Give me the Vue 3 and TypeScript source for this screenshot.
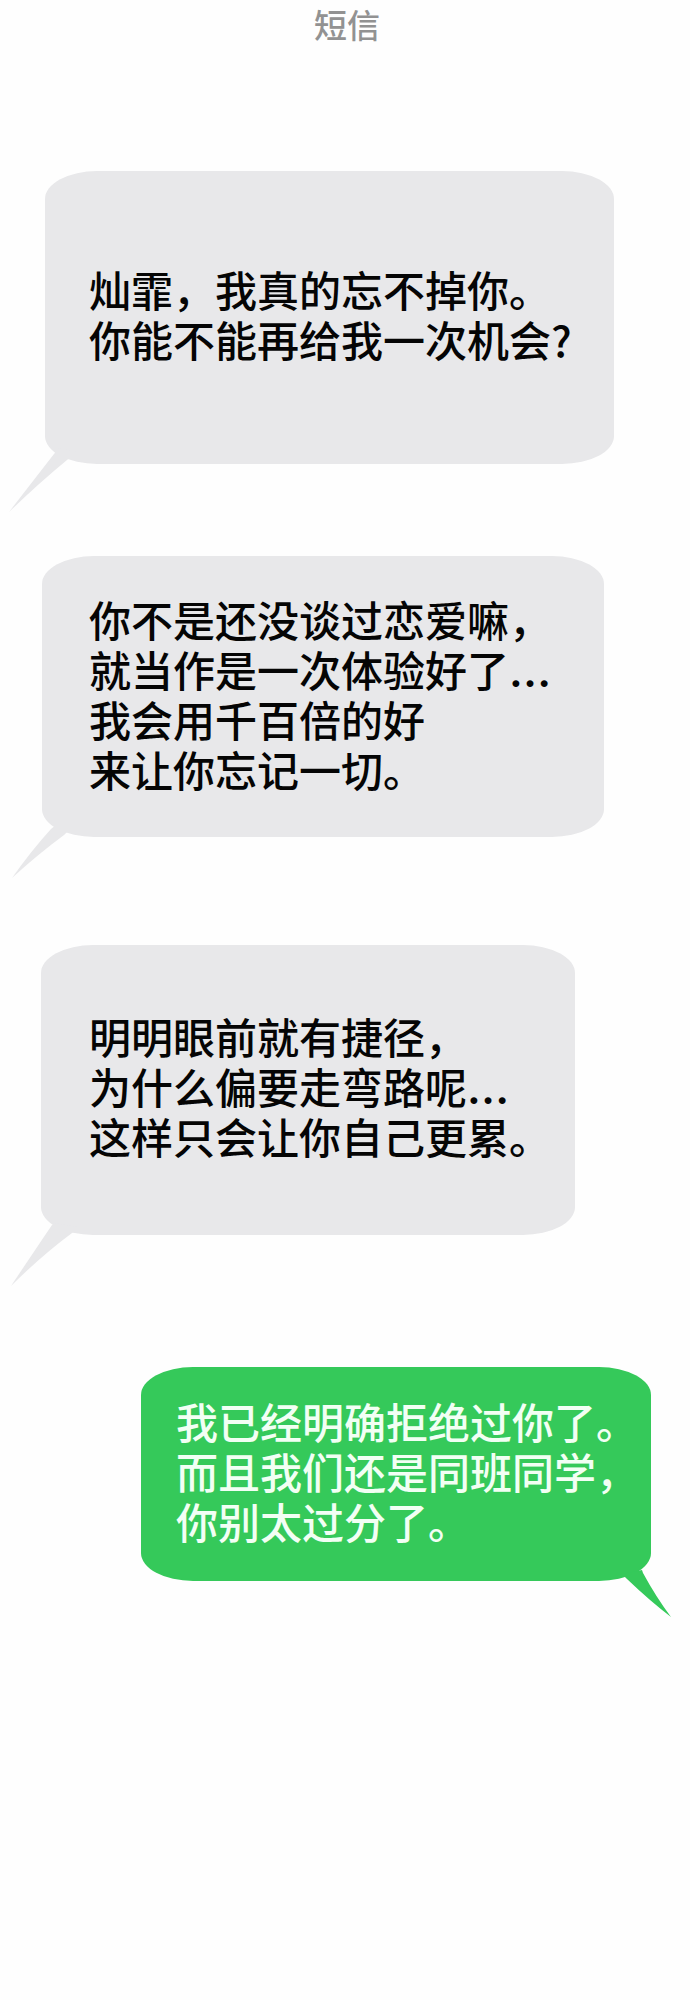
<script setup lang="ts">
interface Message {
  id: string
  side: 'received' | 'sent'
  lines: string[]
  tail: string
}

const messages: Message[] = [
  {
    id: 'plea',
    side: 'received',
    lines: ['灿霏，我真的忘不掉你。', '你能不能再给我一次机会?'],
    tail: 'M50 0 L45 6 Q24 33 0 64 Q30 35 58 12 L68 4 Z',
  },
  {
    id: 'offer',
    side: 'received',
    lines: ['你不是还没谈过恋爱嘛，', '就当作是一次体验好了…', '我会用千百倍的好', '来让你忘记一切。'],
    tail: 'M46 0 L41 4 Q21 26 2 53 Q27 30 54 10 L64 0 Z',
  },
  {
    id: 'shortcut',
    side: 'received',
    lines: ['明明眼前就有捷径，', '为什么偏要走弯路呢…', '这样只会让你自己更累。'],
    tail: 'M46 0 L43 2 Q20 36 2 63 Q32 33 63 10 L70 4 Z',
  },
  {
    id: 'refusal',
    side: 'sent',
    lines: ['我已经明确拒绝过你了。', '而且我们还是同班同学，', '你别太过分了。'],
    tail: 'M4 4 L9 9 Q32 31 53 47 Q38 27 25 3 L24 0 Z',
  },
]
</script>

<template>
  <main class="page">
    <h1 class="title">短信</h1>
    <ol class="thread">
      <li v-for="m in messages" :key="m.id" class="bubble" :class="[m.side, m.id]">
        <p class="text">
          <span v-for="line in m.lines" :key="line" class="line">{{ line.replace('…', '') }}<span v-if="line.endsWith('…')" class="dots">…</span></span>
        </p>
        <svg class="tail" width="72" height="64" viewBox="0 0 72 64" aria-hidden="true">
          <path :d="m.tail" fill="currentColor" />
        </svg>
      </li>
    </ol>
  </main>
</template>

<style>
html,
body {
  margin: 0;
  background: #fefefe;
}
</style>

<style scoped>
.page {
  font-family: "Noto Sans CJK SC", sans-serif;
  min-height: 100vh;
  box-sizing: border-box;
}

.title {
  margin: 0;
  font-size: 33px;
  line-height: 48px;
  font-weight: 500;
  text-align: center;
  text-indent: 4px;
  color: #929292;
}

.thread {
  list-style: none;
  margin: 0;
  padding: 123px 39px 60px 41px;
  display: flex;
  flex-direction: column;
  align-items: flex-start;
}

.bubble {
  position: relative;
  border-radius: 52px / 28px;
}

.received {
  background: #e8e8ea;
  color: #e8e8ea;
}

.sent {
  align-self: flex-end;
  background: #35c95a;
  color: #35c95a;
}

.plea {
  margin: 0 0 92px 4px;
  padding: 93px 42px 100px 44px;
}

.offer {
  margin: 0 0 108px 1px;
  padding: 38px 53px 43px 47px;
}

.shortcut {
  margin: 0 0 132px;
  padding: 66px 24px 74px 48px;
}

.refusal {
  padding: 29px 13px 35px 35px;
}

.text {
  margin: 0;
  font-size: 42px;
  line-height: 50px;
  font-weight: 500;
  color: #050505;
}

.sent .text {
  color: #f2fff4;
}

.line {
  display: block;
}

.dots {
  font-family: "Liberation Serif", serif;
  font-weight: 700;
  line-height: 1;
}

.tail {
  position: absolute;
}

.received .tail {
  left: -36px;
  bottom: -48px;
}

.offer .tail,
.shortcut .tail {
  left: -32px;
  bottom: -52px;
}

.sent .tail {
  right: -39px;
  bottom: -53px;
}
</style>
